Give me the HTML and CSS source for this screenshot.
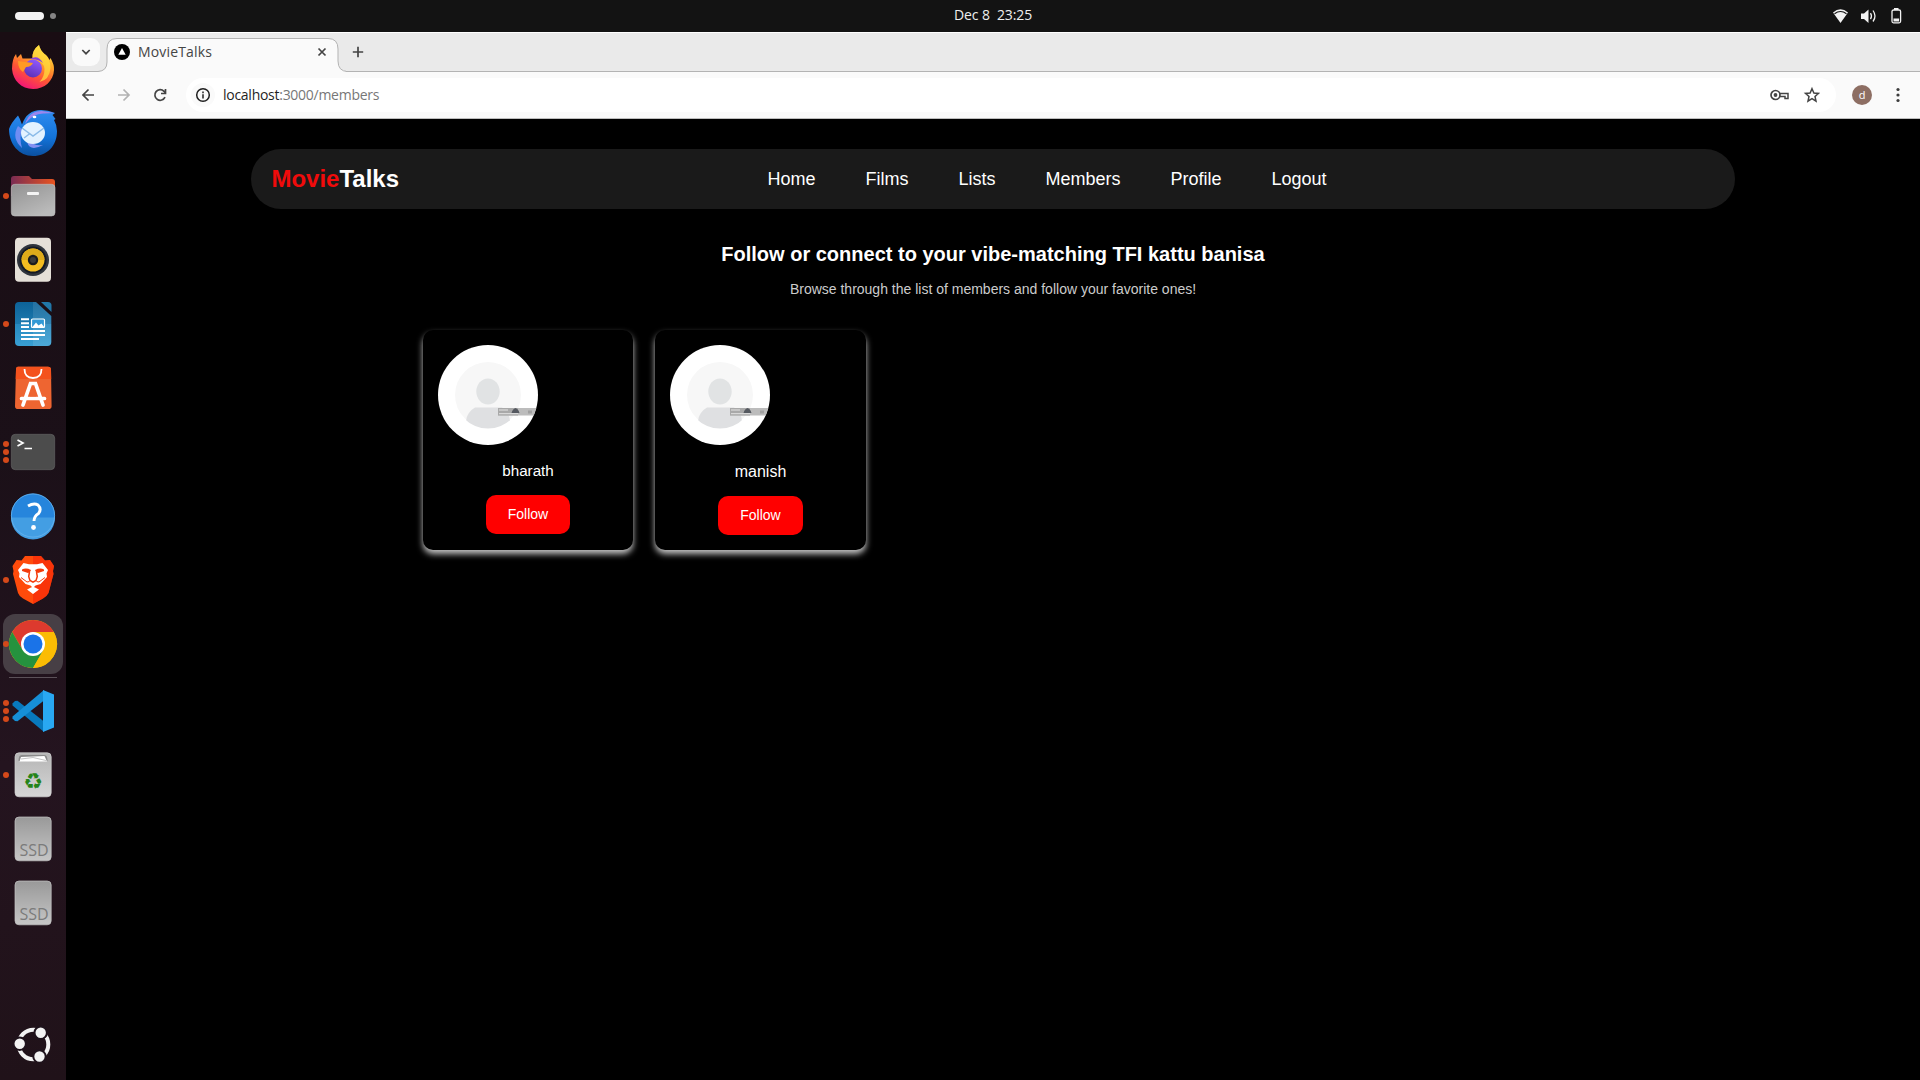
FILE: index.html
```html
<!DOCTYPE html>
<html lang="en">
<head>
<meta charset="utf-8">
<title>MovieTalks</title>
<link rel="stylesheet" href="styles.css">
</head>
<body>
<header class="topbar">
  <div class="workspaces"><span class="ws-active"></span><span class="ws-dot"></span></div>
  <div class="clock"><span>Dec 8</span><span>23:25</span></div>
  <svg class="tray" width="72" height="20" viewBox="0 0 72 20">
    <path d="M0 6.5Q7.500 0 15 6.500L7.500 17Z" fill="#f2f2f2"/>
    <path d="M1.500 7.700Q7.500 3.300 13.500 7.700" fill="none" stroke="#131313" stroke-width="1.200"/>
    <path d="M28 7.500h3l4.500-4v13.500l-4.500-4h-3z" fill="#f2f2f2"/>
    <path d="M37.500 7.200q2 3 0 6M40 4.500q4 5.700 0 11" fill="none" stroke="#f2f2f2" stroke-width="1.300"/>
    <rect x="59" y="4" width="8.600" height="12.800" rx="1.500" fill="none" stroke="#f2f2f2" stroke-width="1.300"/>
    <path d="M61 2h4.500v2H61zM60.500 12.500h5.600v3h-5.600z" fill="#f2f2f2"/>
  </svg>
</header>
<div class="desktop">
  <aside class="dock">
    <div class="app"><svg class="icon" viewBox="0 0 64 64">
      <defs>
        <linearGradient id="ff" x1=".8" y1="0" x2=".3" y2="1"><stop offset="0" stop-color="#fff44f"/><stop offset=".35" stop-color="#ffa62a"/><stop offset=".65" stop-color="#ff5634"/><stop offset="1" stop-color="#f0127b"/></linearGradient>
        <linearGradient id="fp" x1=".7" y1="0" x2=".3" y2="1"><stop offset="0" stop-color="#9059ff"/><stop offset="1" stop-color="#5b30b5"/></linearGradient>
      </defs>
      <path d="M15 18l1 4 4-4 1.500 4.500h10q-1-8 6.500-13.500 1 5 5.500 9 2.500 1 5 6l1-2q4 7 3.500 12c-.5 11-9.500 19-21 19s-20-8.500-21-20q0-10 4-15z" fill="url(#ff)"/>
      <path d="M38 9q1 5 5.500 9 6 5 6 14-1 12-11 14 5-5 5-13 0-7-12-10.500Q31 14 38 9z" fill="#ffdc3e" opacity=".75"/>
      <circle cx="32" cy="32.500" r="9" fill="url(#fp)"/>
      <path d="M17 25q8 1 15 2-2 4-7 4l-3 5q-5-3-5-11z" fill="#ff9a25"/>
      <path d="M29 23q8-5 13 4-5-4-13-4z" fill="#8a42dd"/>
    </svg></div>
    <div class="app"><svg class="icon" viewBox="0 0 64 64">
      <defs><linearGradient id="tb" x1="0" y1="0" x2="0" y2="1"><stop offset="0" stop-color="#2f8cf0"/><stop offset=".6" stop-color="#1373d9"/><stop offset="1" stop-color="#0b4f9f"/></linearGradient></defs>
      <path d="M8 29q2-6 9-13.500 2 3 4 9Q26 10 40 10q7 0 14 3l-2.500 2 3 4-1.500 1q3 5 3 11c0 15-10 25-24 25S8 44 8 29z" fill="url(#tb)"/>
      <path d="M24 24q4-13 17-13l12 2-10 .5Q32 13 24 24z" fill="#9b86ee"/>
      <path d="M17 26q-7 12 4 22-3-10 0-19z" fill="#6f8df3"/>
      <path d="M26 42q3 10 16 3-10 1-12-4z" fill="#8390f2"/>
      <ellipse cx="32" cy="33" rx="12" ry="11" fill="#e3f2ff"/>
      <path d="M21 28l11 8 11-8M23 38l6-4.500" fill="none" stroke="#8bbbe8" stroke-width="1.500"/>
      <ellipse cx="33.500" cy="17" rx="1.900" ry="1.300" fill="#fff"/>
    </svg></div>
    <div class="app"><i class="dots"><b></b></i><svg class="icon" viewBox="0 0 64 64">
      <defs><linearGradient id="fb"><stop offset="0" stop-color="#7a2c53"/><stop offset="1" stop-color="#e95420"/></linearGradient><linearGradient id="fg" x1="0" y1="0" x2=".6" y2="1"><stop offset="0" stop-color="#929292"/><stop offset="1" stop-color="#bababa"/></linearGradient></defs>
      <path d="M10 32V15q0-3 3-3h15l3 3h20q3 0 3 3v14z" fill="url(#fb)"/>
      <rect x="10.300" y="20.300" width="43.700" height="31.700" rx="3.500" fill="url(#fg)" stroke="#c0c0c0" stroke-width=".6"/>
      <rect x="26" y="28" width="12" height="3" rx="1" fill="#f4f4f4"/>
    </svg></div>
    <div class="app"><svg class="icon" viewBox="0 0 64 64">
      <rect x="14" y="9.800" width="36" height="44" rx="4" fill="#e5e0d8"/>
      <circle cx="32" cy="32" r="16" fill="#30353d"/><circle cx="32" cy="32" r="13.500" fill="#151a24"/>
      <circle cx="32" cy="32" r="11.500" fill="#f4bd20"/><path d="M20.500 32a11.500 11.500 0 0 1 23 0z" fill="#ddaa1a"/><circle cx="32" cy="32" r="5.200" fill="#1c1c1c"/><circle cx="32" cy="32" r="3" fill="#3b3b3b"/>
    </svg></div>
    <div class="app"><i class="dots"><b></b></i><svg class="icon" viewBox="0 0 64 64">
      <defs><linearGradient id="wr" x1="0" y1="0" x2="0" y2="1"><stop offset="0" stop-color="#0d6298"/><stop offset=".5" stop-color="#1c79ae"/><stop offset=".5" stop-color="#2789bf"/><stop offset="1" stop-color="#39a0d4"/></linearGradient></defs>
      <path d="M18 10H35l15.300 14v26q0 4-4 4H18q-4 0-4-4V14q0-4 4-4z" fill="url(#wr)"/>
      <path d="M32 10h3l15.300 14v26q0 4-4 4H32z" fill="#fff" opacity=".1"/>
      <path d="M40 10h7q3.500 0 3.500 3.500V20z" fill="#2177a8"/>
      <path d="M20 27.300h8M20 31.200h8M20 35h8M20 39h24M20 42.900h24M20 47h18" stroke="#fff" stroke-width="2"/>
      <rect x="30.500" y="27" width="13" height="8.500" rx="1" fill="#3299d5" stroke="#fff" stroke-width="1.200"/>
      <path d="M31 35.500l4-5 2.500 3 3-2 3 4z" fill="#fff"/>
    </svg></div>
    <div class="app"><svg class="icon" viewBox="0 0 64 64">
      <path d="M17 10.700h30q3 0 3 3l.6 36.500q0 2.800-3 2.800H17q-3 0-3-2.800L15 13.700q0-3 2-3z" fill="#ee6531"/>
      <path d="M17 10.700h30q3 0 3 3l.2 9.300H14.700l.3-9.300q0-3 2-3z" fill="#f4521d"/>
      <path d="M23.500 13q0 9 8.500 9t8.500-9" fill="none" stroke="#fff" stroke-width="1.800"/>
      <path d="M22 49l7.500-21.500h5L42 49M20.500 42.500h23" fill="none" stroke="#fff" stroke-width="3.700" stroke-linecap="round"/>
      <path d="M32 31l-3.300 9.500h6.600z" fill="#ee6531"/>
    </svg></div>
    <div class="app"><i class="dots"><b></b><b></b><b></b></i><svg class="icon" viewBox="0 0 64 64">
      <rect x="10.300" y="14.300" width="43.400" height="35.400" rx="4" fill="#4c4c4c" stroke="#686868" stroke-width=".6"/>
      <path d="M16.500 20l5.500 3-5.500 3M23.500 28.500h7.500" fill="none" stroke="#fff" stroke-width="1.700"/>
    </svg></div>
    <div class="app"><svg class="icon" viewBox="0 -.5 64 64">
      <circle cx="32" cy="31" r="22" fill="#2685dc"/><path d="M10 33a22 22 0 0 0 44 0z" fill="#439ee3"/>
      <circle cx="32" cy="31" r="21.600" fill="none" stroke="#69b5ee" stroke-width=".8"/>
      <path d="M27 21.500Q33 18 37 20.500q4 4 .5 8.500Q33 32 33 36.500" fill="none" stroke="#fff" stroke-width="2.900"/><circle cx="32.500" cy="43" r="2.400" fill="#fff"/>
    </svg></div>
    <div class="app"><i class="dots"><b></b></i><svg class="icon" viewBox="0 0 64 64">
      <path d="M24 8h16l4 4.500 5-.5 4 6-1 5 .5 3-5 19Q46 48 42 50.500L32 56l-10-5.500Q18 48 17 45l-5-19 .5-3-1-5 4-6 5 .5z" fill="#ff4b0b"/>
      <path d="M32 8h8l4 4.500 5-.5 4 6-1 5 .5 3-5 19Q46 48 42 50.500L32 56z" fill="#f52508" opacity=".6"/>
      <path d="M22.500 15l5.500 1.200h8L41.500 15l5.500 7-1.500 3.500 .5 3.500-6.500 7-5 1.500L32 40l-2.500-2.500-5-1.500-6.500-7 .5-3.500L17 22zM32 38.500l6 3L32 46l-6-4.500z" fill="#fff"/>
      <path d="M21 21.500q4-2 9 .5l-1 2-2 1-6-2zM43 21.500q-4-2-9 .5l1 2 2 1 6-2z" fill="#f43b0b"/>
      <path d="M28.500 24l-.8 4.500 1.300 4 3 1.700 3-1.700 1.300-4-.8-4.500" fill="none" stroke="#f43b0b" stroke-width="1.500"/>
      <path d="M20 29.500l6 4.500 2.500-.5M44 29.500l-6 4.500-2.500-.5" fill="none" stroke="#f43b0b" stroke-width="1"/>
    </svg></div>
    <div class="app focused"><i class="dots"><b></b></i><svg class="icon" viewBox="0 0 64 64">
      <circle cx="32" cy="32" r="24" fill="#fbbc04"/>
      <path d="M11.200 20A24 24 0 0 1 52.800 20H32L21.600 38z" fill="#dd3a2e"/>
      <path d="M11.200 20A24 24 0 0 0 32 56L42.400 38 32 32 21.600 38z" fill="#25923e"/>
      <path d="M52.800 20H32V44L42.400 38 32 56A24 24 0 0 0 52.800 20z" fill="#fbbc04"/>
      <circle cx="32" cy="32" r="12" fill="#fff"/><circle cx="32" cy="32" r="9.500" fill="#1a73e8"/>
    </svg></div>
    <div class="divider"></div>
    <div class="app"><i class="dots"><b></b><b></b><b></b></i><svg class="icon" viewBox="0 0 64 64">
      <path d="M11.500 24.500l2.500-2.500 2.500-.3L43 42.500V53L11.500 26.500z" fill="#0879bd"/>
      <path d="M11.500 39.500l2.500 2.500 2.500.3L43 21.500V11L11.500 37.500z" fill="#168fd7"/>
      <path d="M42 11l11 4.500v33L42 53z" fill="#29a8f2"/>
    </svg></div>
    <div class="app"><i class="dots"><b></b></i><svg class="icon" viewBox="0 0 64 64">
      <defs><linearGradient id="tr" x1="0" y1="0" x2="0" y2="1"><stop offset="0" stop-color="#b5b5b5"/><stop offset="1" stop-color="#d6d6d6"/></linearGradient></defs>
      <rect x="14" y="9.800" width="36.200" height="44" rx="4" fill="url(#tr)" stroke="#d2d2d2" stroke-width=".7"/>
      <path d="M17.500 18q0-6 3-6h23q3 0 3 6z" fill="#8a8a8a"/><path d="M18.500 18.500l1.500-4.500 23.500-1 2.500 5.500z" fill="#fff"/><path d="M20 16l12-1.500 13 3" stroke="#aaa" stroke-width=".7" fill="none"/>
      <text class="recycle" x="32.300" y="45.700">♻</text>
    </svg></div>
    <div class="app"><svg class="icon" viewBox="0 0 64 64">
      <defs><linearGradient id="sd" x1="0" y1="0" x2="0" y2="1"><stop offset="0" stop-color="#999"/><stop offset="1" stop-color="#c6c6c6"/></linearGradient></defs>
      <rect x="14" y="10" width="36.200" height="43.800" rx="4" fill="url(#sd)" stroke="#c4c4c4" stroke-width=".7"/>
      <text class="ssd" x="18.500" y="48.500">SSD</text>
    </svg></div>
    <div class="app"><svg class="icon" viewBox="0 0 64 64">
      <rect x="14" y="10" width="36.200" height="43.800" rx="4" fill="url(#sd)" stroke="#c4c4c4" stroke-width=".7"/>
      <text class="ssd" x="18.500" y="48.500">SSD</text>
    </svg></div>
    <div class="app launcher"><svg class="icon" viewBox="0 0 64 64">
      <circle cx="32.500" cy="32.500" r="14.800" fill="none" stroke="#f3f3f3" stroke-width="4"/>
      <g fill="#f3f3f3" stroke="#1f131c" stroke-width="2"><circle cx="39.700" cy="20.700" r="6.200"/><circle cx="18.700" cy="31.700" r="6.200"/><circle cx="38.500" cy="44.500" r="6.200"/></g>
    </svg></div>
  </aside>

  <section class="browser">
    <div class="tabstrip">
      <span class="tabsearch"><svg width="28" height="28" viewBox="0 0 28 28"><path d="M10.300 12l3.700 3.700 3.700-3.700" class="ln dark"/></svg></span>
      <div class="tab">
        <svg class="tabshape" width="252" height="40" viewBox="0 0 252 40"><path d="M0 40V33.500H4Q13 33 13 24V11Q13 .5 23 .5H234Q244 .5 244 11V23Q244 33.500 254 33.500V40Z" fill="#fafafa"/><path d="M0 33.500H4Q13 33 13 24V11Q13 .5 23 .5H234Q244 .5 244 11V23Q244 33.500 254 33.500" fill="none" stroke="#b3b3b3"/></svg>
        <svg class="favicon" width="16" height="16" viewBox="0 0 16 16"><circle cx="8" cy="8" r="8"/><path d="M8 4l3.700 6.800H4.300z" fill="#fff"/></svg>
        <span class="tabtitle">MovieTalks</span>
        <svg class="tabclose" width="10" height="10" viewBox="0 0 10 10"><path d="M1.500 1.500l7 7M8.500 1.500l-7 7" class="ln dark"/></svg>
      </div>
      <svg class="newtab" width="12" height="12" viewBox="0 0 12 12"><path d="M6 .8v10.400M.8 6h10.400" class="ln dark"/></svg>
    </div>
    <div class="toolbar">
      <svg class="nav-icons" width="102" height="20" viewBox="0 0 102 20">
        <path d="M12 10H1M6.500 4.500L1 10l5.500 5.500" class="ln dark"/>
        <path d="M36 10h11M41.500 4.500L47 10l-5.500 5.500" class="ln faint"/>
        <path d="M83 12.200A5.300 5.300 0 1 1 82 6.300L83.500 8M83.500 4v4.500H79" class="ln dark"/>
      </svg>
      <div class="omnibox">
        <span class="site"><svg width="16" height="16" viewBox="0 0 16 16"><circle cx="8" cy="8" r="6.300" class="ln ink"/><path d="M8 7.300V11.500M8 4.500v1.700" class="ln ink"/></svg></span>
        <span class="url"><em>localhost</em>:3000/members</span>
        <svg class="omni-icons" width="50" height="20" viewBox="0 0 50 20">
          <circle cx="5.500" cy="10" r="4.500" class="ln dark"/><circle cx="5.500" cy="10" r="1.900" fill="#474747"/><path d="M10 8.500h8v5h-3v-2h-5" class="ln dark thin"/>
          <path d="M42 3.700l1.900 4.300 4.600.4-3.500 3.100 1 4.600-4-2.400-4 2.400 1-4.600-3.500-3.100 4.600-.4z" class="ln dark thin"/>
        </svg>
      </div>
      <span class="avatar">d</span>
      <svg width="4" height="16" viewBox="0 0 4 16"><g fill="#3c3c3c"><circle cx="2" cy="2.500" r="1.600"/><circle cx="2" cy="8" r="1.600"/><circle cx="2" cy="13.500" r="1.600"/></g></svg>
    </div>

    <main class="page">
      <nav class="navbar">
        <div class="logo"><span>Movie</span>Talks</div>
        <div class="links"><a>Home</a><a>Films</a><a>Lists</a><a>Members</a><a>Profile</a><a>Logout</a></div>
      </nav>
      <h1>Follow or connect to your vibe-matching TFI kattu banisa</h1>
      <p class="sub">Browse through the list of members and follow your favorite ones!</p>
      <div class="cards">
        <article class="card">
          <svg class="photo" width="100" height="100" viewBox="0 0 100 100">
            <defs><clipPath id="round"><circle cx="50" cy="50" r="50"/></clipPath><clipPath id="inner"><circle cx="50" cy="50" r="33.500"/></clipPath></defs>
            <g id="person" clip-path="url(#round)">
              <rect width="100" height="100" fill="#fff"/><circle cx="50" cy="50" r="33" fill="#f7f7f7"/>
              <ellipse cx="50" cy="46.500" rx="11.700" ry="13" fill="#e1e3e4"/>
              <path clip-path="url(#inner)" d="M28 76q1-9 9-13.500h27q7 4 8 13.500v10H28z" fill="#dfe0e2"/>
              <path d="M60 63h40v7.500H60z" fill="#bcbcbc"/><path d="M60 63h20v7.500H60z" fill="#a9a9a9"/>
              <path d="M61 65h9M61 68.700h19" stroke="#e4e4e4"/><path d="M73.500 68q1-4 4-5 3 1 4 5z" fill="#555960"/><path d="M90 65.500h4v3h-4z" fill="#a0a0a0"/>
            </g>
          </svg>
          <span class="name">bharath</span>
          <button class="follow">Follow</button>
        </article>
        <article class="card hovered">
          <svg class="photo" width="100" height="100" viewBox="0 0 100 100"><use href="#person"/></svg>
          <span class="name">manish</span>
          <button class="follow">Follow</button>
        </article>
      </div>
    </main>
  </section>
</div>
</body>
</html>
```
FILE: styles.css
```css
* { box-sizing: border-box; }
body {
  margin: 0;
  width: 1920px;
  height: 1080px;
  overflow: hidden;
  display: flex;
  flex-direction: column;
  background: #000;
  font-family: "Liberation Sans", sans-serif;
}
svg { display: block; flex: none; }

/* Desktop top bar */
.topbar {
  height: 32px;
  flex: none;
  display: grid;
  grid-template-columns: 954px 1fr 87px;
  align-items: center;
  background: #131313;
}
.workspaces { display: flex; align-items: center; gap: 6px; padding-left: 15px; }
.ws-active { width: 29px; height: 8px; border-radius: 4px; background: #f3f3f3; }
.ws-dot { width: 6px; height: 6px; border-radius: 3px; background: #858585; }
.clock {
  display: flex;
  gap: 7px;
  color: #efefef;
  font: 14px/20px "Open Sans", sans-serif;
  letter-spacing: -.1px;
  padding-bottom: 2px;
}

/* Dock */
.desktop { flex: 1; display: flex; min-height: 0; }
.dock {
  width: 66px;
  flex: none;
  display: flex;
  flex-direction: column;
  padding: 4px 0;
  background: linear-gradient(#190d13 0, #1b1018 40%, #24141f 70%, #201219 100%);
}
.app {
  height: 64px;
  flex: none;
  display: flex;
  align-items: center;
  position: relative;
}
.icon { width: 64px; height: 64px; margin-left: 1px; }
.focused::before {
  content: "";
  position: absolute;
  inset: 2px 3px;
  border-radius: 12px;
  background: #473f45;
}
.focused .icon { position: relative; }
.dots {
  position: absolute;
  left: 3px;
  top: 0;
  height: 64px;
  display: flex;
  flex-direction: column;
  justify-content: center;
  gap: 2px;
}
.dots b { width: 5.500px; height: 6px; border-radius: 3px; background: #d4491a; }
.divider { height: 1px; flex: none; margin: 1px 9px; background: #5b5158; }
.launcher { margin-top: auto; }
.ssd { font: 16px "Open Sans", sans-serif; fill: #7b7b7b; }
.recycle { font: 22px "DejaVu Sans", sans-serif; fill: #258419; text-anchor: middle; }

/* Browser window */
.browser { flex: 1; min-width: 0; display: flex; flex-direction: column; }
.tabstrip {
  height: 40px;
  flex: none;
  display: flex;
  background: linear-gradient(#b3b3b3, #b3b3b3) 0 38px / 100% 1px no-repeat, #eaeaea;
  border-top: 1px solid #fff;
}
.tabsearch { margin: 5px 0 0 6px; width: 28px; height: 28px; border-radius: 9px; background: #fafafa; flex: none; }
.tab { position: relative; width: 237px; margin-left: -6px; height: 40px; display: flex; align-items: center; padding: 0 4px 2px 20px; }
.tabshape { position: absolute; left: 0; top: 5px; }
.favicon, .tabtitle, .tabclose { position: relative; }
.tabtitle { margin-left: 8px; flex: 1; font: 14px/20px "Open Sans", sans-serif; letter-spacing: .15px; color: #454545; }
.newtab { margin: 13px 0 0 21px; position: relative; }
.toolbar {
  height: 47px;
  flex: none;
  display: flex;
  align-items: center;
  background: #fafafa;
  border-bottom: 1px solid #bdbdbd;
  padding: 0 20px 0 16px;
}
.ln { fill: none; stroke-width: 1.700; }
.thin { stroke-width: 1.500; }
.dark { stroke: #444; }
.ink { stroke: #1f1f1f; stroke-width: 1.500; }
.faint { stroke: #b2b2b2; }
.omnibox {
  flex: 1;
  height: 34px;
  margin: 0 16px 0 2px;
  border-radius: 17px;
  background: #fff;
  display: flex;
  align-items: center;
  padding: 0 16px 0 5px;
}
.site { width: 24px; height: 24px; border-radius: 12px; background: #fafafa; display: flex; align-items: center; justify-content: center; }
.url { flex: 1; margin-left: 8px; font: 14px/20px "Open Sans", sans-serif; letter-spacing: -.27px; color: #777; }
.url em { font-style: normal; color: #1f1f1f; }
.avatar {
  width: 20px;
  height: 20px;
  border-radius: 10px;
  margin-right: 24px;
  background: #8d6e63;
  color: #fff;
  font: 11px/20px "Open Sans", sans-serif;
  text-align: center;
}

/* MovieTalks page */
.page { flex: 1; display: flex; flex-direction: column; align-items: center; padding-top: 30px; color: #fff; background: #000; }
.navbar {
  width: 80%;
  height: 60px;
  border-radius: 30px;
  padding: 0 20px;
  background: #1a1a1a;
  display: flex;
  align-items: center;
}
.logo { width: 496px; font-size: 24px; font-weight: bold; }
.logo span { color: #f00b0b; }
.links { display: flex; gap: 50px; font-size: 18px; }
h1 { margin: 34px 0 0; font-size: 20px; line-height: 23px; }
.sub { margin: 15px 0 0; font-size: 14px; line-height: 16px; color: #ccc; }
.cards { align-self: stretch; display: flex; gap: 22px; margin-top: 33px; padding-left: 357px; }
.card {
  width: 210px;
  height: 220px;
  padding: 15px;
  border-radius: 10px;
  background: #000;
  box-shadow: 0 4px 6px #c4c4c4;
  display: flex;
  flex-direction: column;
  align-items: center;
}
.photo { align-self: flex-start; }
.name { margin-top: 16px; font-size: 15.200px; line-height: 19px; }
.follow {
  width: 84px;
  height: 39px;
  margin-top: 15px;
  padding: 0;
  border: 0;
  border-radius: 10px;
  background: #f00;
  color: #fff;
  font: 14px/39px "Liberation Sans", sans-serif;
}
.hovered { width: 211px; }
.hovered .name { margin-top: 17px; font-size: 16px; }
.hovered .follow { width: 85px; }
```
